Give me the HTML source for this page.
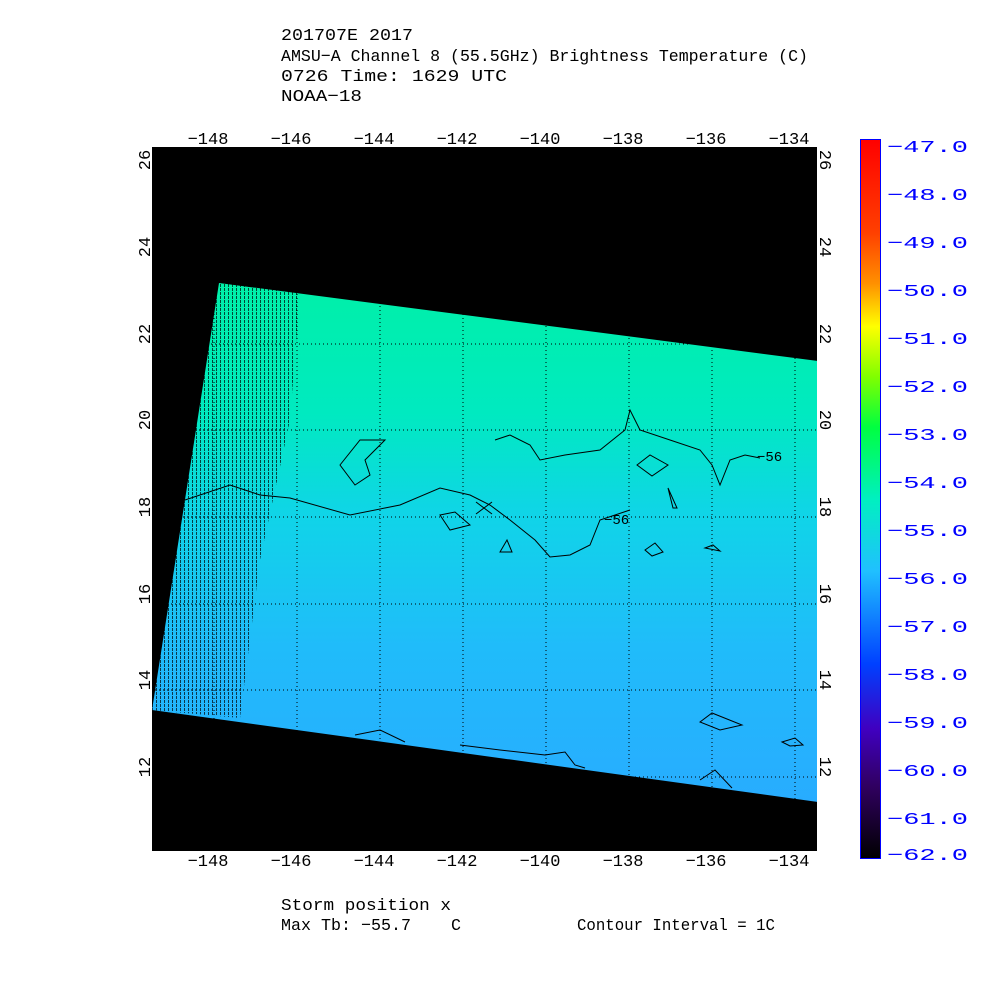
<!DOCTYPE html>
<html><head><style>body{margin:0;background:#fff}svg{display:block}text{font-family:"Liberation Mono",monospace;white-space:pre}</style></head><body>
<svg width="1000" height="1000" viewBox="0 0 1000 1000" xmlns="http://www.w3.org/2000/svg">
<defs>
<linearGradient id="d" x1="0" y1="0" x2="0" y2="1">
<stop offset="0" stop-color="#00f0a8"/><stop offset="0.25" stop-color="#00eac0"/><stop offset="0.45" stop-color="#10d4e8"/><stop offset="0.7" stop-color="#20bcfa"/><stop offset="1" stop-color="#28acff"/></linearGradient>
<linearGradient id="c" x1="0" y1="0" x2="0" y2="1">
<stop offset="0" stop-color="#ff0000"/><stop offset="0.13" stop-color="#ff4000"/><stop offset="0.2" stop-color="#ff9000"/><stop offset="0.26" stop-color="#ffff00"/><stop offset="0.33" stop-color="#80ff00"/><stop offset="0.4" stop-color="#00ff40"/><stop offset="0.5" stop-color="#00f0c0"/><stop offset="0.6" stop-color="#20c0ff"/><stop offset="0.73" stop-color="#0040ff"/><stop offset="0.82" stop-color="#4000c0"/><stop offset="0.9" stop-color="#300060"/><stop offset="1" stop-color="#000"/></linearGradient>
<pattern id="h" width="4" height="4" patternUnits="userSpaceOnUse"><rect width="1" height="3" fill="#000"/></pattern>
</defs>
<g font-size="17" fill="#000">
<text x="281" y="40" textLength="132" lengthAdjust="spacingAndGlyphs">201707E 2017</text>
<text x="281" y="61" textLength="527" lengthAdjust="spacingAndGlyphs">AMSU−A Channel 8 (55.5GHz) Brightness Temperature (C)</text>
<text x="281" y="81" textLength="226" lengthAdjust="spacingAndGlyphs">0726 Time: 1629 UTC</text>
<text x="281" y="101" textLength="81" lengthAdjust="spacingAndGlyphs">NOAA−18</text>
<text x="281" y="910" textLength="170" lengthAdjust="spacingAndGlyphs">Storm position x</text>
<text x="281" y="930" textLength="180" lengthAdjust="spacingAndGlyphs">Max Tb: −55.7&#160;&#160;&#160;&#160;C</text>
<text x="577" y="930" textLength="198" lengthAdjust="spacingAndGlyphs">Contour Interval = 1C</text>
</g>
<rect x="151" y="146" width="667" height="706" fill="#000"/>
<polygon points="219,283 818,361 818,802 152,710" fill="url(#d)"/>
<polygon points="219,283 300,290 290,420 260,560 240,718 152,710" fill="url(#h)" opacity="0.7"/>
<g stroke="#000" stroke-dasharray="1,3" stroke-width="1">
<path d="M214,146V852M297,146V852M380,146V852M463,146V852M546,146V852M629,146V852M712,146V852M795,146V852M151,170H818M151,257H818M151,344H818M151,430H818M151,517H818M151,604H818M151,690H818M151,777H818"/>
</g>
<g fill="none" stroke="#fff" stroke-width="2"><path d="M151,146H818V852H151Z"/></g>
<g fill="none" stroke="#000" stroke-width="1">
<path d="M185,500 L230,485 L260,495 L290,498 L350,515 L400,505 L440,488 L470,495 L490,505 L510,520 L535,540 L550,557 L570,555 L590,545 L600,520 L630,510"/>
<path d="M495,440 L510,435 L530,445 L540,460 L565,455 L600,450 L625,430 L630,410 L640,430 L670,440 L700,450 L712,465 L720,485 L730,460 L745,455 L760,458"/>
<path d="M340,465 L360,440 L385,440 L365,460 L370,475 L355,485 Z"/>
<path d="M637,465 L650,455 L668,465 L652,476 Z"/>
<path d="M440,515 L455,512 L470,525 L450,530 Z"/>
<path d="M500,552 L507,540 L512,552 Z"/>
<path d="M645,550 L655,543 L663,552 L652,556 Z"/>
<path d="M700,722 L712,713 L742,725 L720,730 Z"/>
<path d="M355,735 L380,730 L405,742"/><path d="M460,745 L500,750 L545,755 L565,752 L575,765 L585,768"/>
<path d="M700,780 L715,770 L732,788"/><path d="M782,742 L795,738 L803,745 L790,746 Z"/>
<path d="M668,488 L673,508 L677,508 Z"/><path d="M705,548 L713,545 L720,551 Z"/>
<path d="M476,502 L492,514 M476,514 L492,502"/>
</g>
<g font-size="14" fill="#000"><text x="757" y="461">−56</text><text x="604" y="524">−56</text></g>
<g font-size="17" fill="#000" text-anchor="middle">
<text x="208" y="144">−148</text><text x="291" y="144">−146</text><text x="374" y="144">−144</text><text x="457" y="144">−142</text><text x="540" y="144">−140</text><text x="623" y="144">−138</text><text x="706" y="144">−136</text><text x="789" y="144">−134</text>
<text x="208" y="866">−148</text><text x="291" y="866">−146</text><text x="374" y="866">−144</text><text x="457" y="866">−142</text><text x="540" y="866">−140</text><text x="623" y="866">−138</text><text x="706" y="866">−136</text><text x="789" y="866">−134</text>
</g>
<g font-size="17" fill="#000" text-anchor="middle">
<text transform="translate(150,160) rotate(-90)">26</text><text transform="translate(150,247) rotate(-90)">24</text><text transform="translate(150,334) rotate(-90)">22</text><text transform="translate(150,420) rotate(-90)">20</text><text transform="translate(150,507) rotate(-90)">18</text><text transform="translate(150,594) rotate(-90)">16</text><text transform="translate(150,680) rotate(-90)">14</text><text transform="translate(150,767) rotate(-90)">12</text>
<text transform="translate(820,160) rotate(90)">26</text><text transform="translate(820,247) rotate(90)">24</text><text transform="translate(820,334) rotate(90)">22</text><text transform="translate(820,420) rotate(90)">20</text><text transform="translate(820,507) rotate(90)">18</text><text transform="translate(820,594) rotate(90)">16</text><text transform="translate(820,680) rotate(90)">14</text><text transform="translate(820,767) rotate(90)">12</text>
</g>
<rect x="860.5" y="139.5" width="20" height="719" fill="url(#c)" stroke="#00f" stroke-width="1"/>
<g font-size="17" fill="#00f">
<text x="887" y="152" textLength="81" lengthAdjust="spacingAndGlyphs">−47.0</text><text x="887" y="200" textLength="81" lengthAdjust="spacingAndGlyphs">−48.0</text><text x="887" y="248" textLength="81" lengthAdjust="spacingAndGlyphs">−49.0</text><text x="887" y="296" textLength="81" lengthAdjust="spacingAndGlyphs">−50.0</text><text x="887" y="344" textLength="81" lengthAdjust="spacingAndGlyphs">−51.0</text><text x="887" y="392" textLength="81" lengthAdjust="spacingAndGlyphs">−52.0</text><text x="887" y="440" textLength="81" lengthAdjust="spacingAndGlyphs">−53.0</text><text x="887" y="488" textLength="81" lengthAdjust="spacingAndGlyphs">−54.0</text><text x="887" y="536" textLength="81" lengthAdjust="spacingAndGlyphs">−55.0</text><text x="887" y="584" textLength="81" lengthAdjust="spacingAndGlyphs">−56.0</text><text x="887" y="632" textLength="81" lengthAdjust="spacingAndGlyphs">−57.0</text><text x="887" y="680" textLength="81" lengthAdjust="spacingAndGlyphs">−58.0</text><text x="887" y="728" textLength="81" lengthAdjust="spacingAndGlyphs">−59.0</text><text x="887" y="776" textLength="81" lengthAdjust="spacingAndGlyphs">−60.0</text><text x="887" y="824" textLength="81" lengthAdjust="spacingAndGlyphs">−61.0</text><text x="887" y="860" textLength="81" lengthAdjust="spacingAndGlyphs">−62.0</text>
</g>
</svg>
</body></html>
